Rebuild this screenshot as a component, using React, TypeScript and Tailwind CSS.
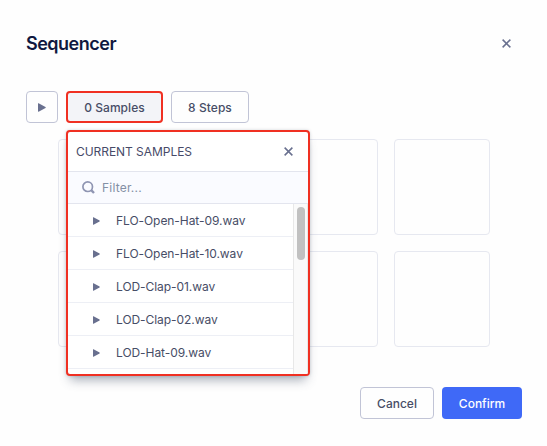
const samples = [
  'FLO-Open-Hat-09.wav',
  'FLO-Open-Hat-10.wav',
  'LOD-Clap-01.wav',
  'LOD-Clap-02.wav',
  'LOD-Hat-09.wav',
];

function Play({ className }: { className: string }) {
  return (
    <svg viewBox="0 0 8 10" className={className} fill="#69708f" preserveAspectRatio="none">
      <path d="M.6.3C.3.1 0 .3 0 .7v8.6c0 .4.3.6.6.4l6.9-4.2c.4-.2.4-.8 0-1z" />
    </svg>
  );
}

function Cross({ className }: { className: string }) {
  return (
    <svg viewBox="0 0 10 10" className={className} stroke="#69708f" strokeWidth="1.7" fill="none">
      <path d="M.7.7l8.6 8.6M9.3.7L.7 9.3" />
    </svg>
  );
}

function SamplesPopover() {
  return (
    <section className="absolute left-0 top-[39px] z-10 flex h-[246px] w-[244px] flex-col overflow-hidden rounded-[4px] border-2 border-[#f03022] bg-white shadow-[0_8px_10px_-4px_rgba(65,78,101,0.45),0_0_3px_rgba(65,78,101,0.25)]">
      <header className="flex h-10 shrink-0 items-center justify-between border-b border-[#e3e5ee] pl-2 pr-[15px]">
        <h2 className="text-[12px] leading-4 tracking-[-0.05px] text-[#474a68]">CURRENT SAMPLES</h2>
        <button aria-label="Close samples">
          <Cross className="size-[9px]" />
        </button>
      </header>
      <label className="flex h-8 shrink-0 items-center border-b border-[#e3e5ee] bg-[#fafbff] pl-[14px]">
        <svg viewBox="0 0 13 13" className="size-[13px]" fill="none" stroke="#8f95b2" strokeWidth="1.7">
          <circle cx="5.7" cy="5.7" r="4.8" />
          <path d="M9.2 9.2l2.8 2.8" strokeWidth="2.4" />
        </svg>
        <span className="ml-[7px] text-[12px] leading-4 tracking-[0.2px] text-[#8490a5]">Filter...</span>
      </label>
      <div className="flex min-h-0 flex-1">
        <ul className="w-[225px] overflow-hidden">
          {samples.map((name) => (
            <li key={name} className="flex h-[33px] items-center border-b border-[#edeff5] pl-[25px] pt-px">
              <Play className="h-2 w-[7px]" />
              <span className="ml-4 text-[12px] leading-4 tracking-[-0.06px] text-[#474d66]">{name}</span>
            </li>
          ))}
        </ul>
        <div className="flex-1 border-x border-[#e8e8e8] bg-[#fafafa] pl-[3px] pt-[3px]">
          <div className="h-[53px] w-2 rounded-full bg-[#c1c1c1]" />
        </div>
      </div>
    </section>
  );
}

const button = 'flex h-8 items-center justify-center rounded-[4px] pt-px text-[12px]';

export default function App() {
  return (
    <main className="h-[446px] w-[547px] overflow-hidden bg-[#fefefe] pl-[26px] pr-[25px] pt-[31px] font-['Inter','Liberation_Sans',sans-serif] text-[#474d66]">
      <header className="flex h-6 items-center justify-between pr-[11px]">
        <h1 className="text-[18px] font-semibold tracking-[-0.5px] text-[#101840]">Sequencer</h1>
        <button aria-label="Close">
          <Cross className="size-[9px]" />
        </button>
      </header>
      <div className="mt-9 flex gap-2">
        <button aria-label="Play" className={`${button} w-8 border border-[#c1c4d6]`}>
          <Play className="h-[9px] w-2" />
        </button>
        <div className="relative">
          <button className={`${button} w-[97px] border-2 border-[#f03022] bg-[#f3f4f8] font-medium tracking-[0.05px]`}>0 Samples</button>
          <SamplesPopover />
        </div>
        <button className={`${button} w-[78px] border border-[#c1c4d6] font-medium tracking-[0.05px]`}>8 Steps</button>
      </div>
      <div className="ml-8 mt-4 grid w-[432px] grid-cols-4 gap-4">
        {Array.from({ length: 8 }, (_, i) => (
          <div key={i} className="size-24 rounded-[4px] border border-[#e6e8f0]" />
        ))}
      </div>
      <footer className="mt-10 flex justify-end gap-2">
        <button className={`${button} w-[74px] border border-[#c1c4d6] font-medium`}>Cancel</button>
        <button className={`${button} w-20 bg-[#3f69f7] font-medium text-white`}>Confirm</button>
      </footer>
    </main>
  );
}
